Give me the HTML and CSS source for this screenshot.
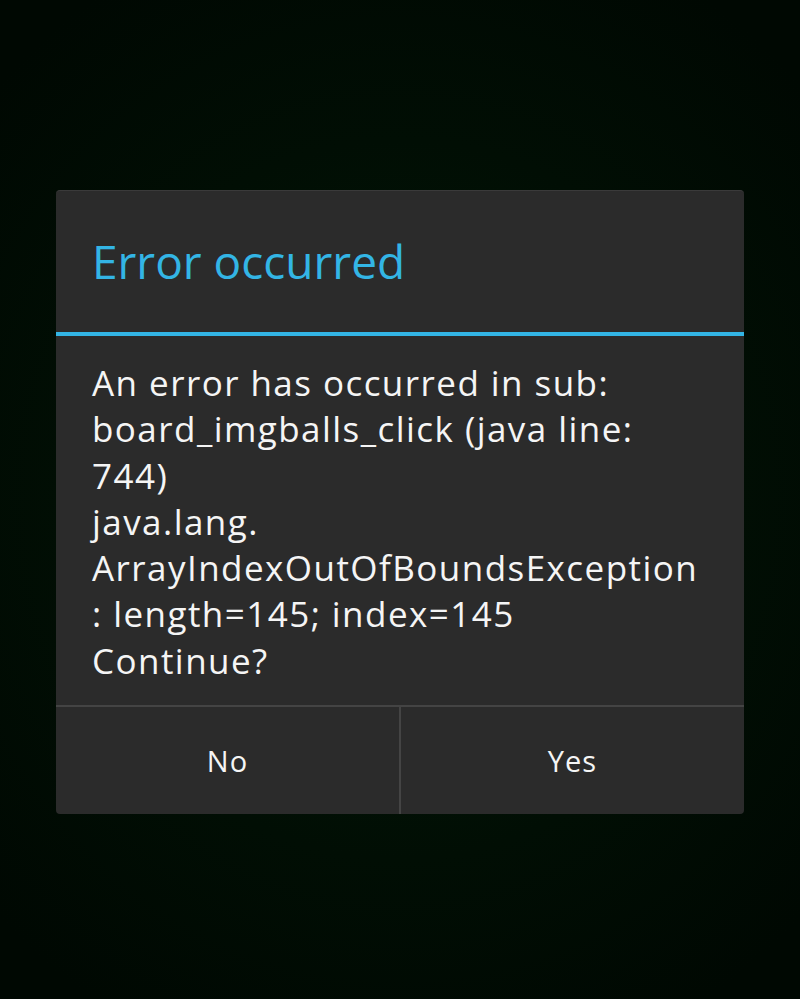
FILE: index.html
```html
<!DOCTYPE html>
<html>
<head>
<meta charset="utf-8">
<link rel="stylesheet" href="styles.css">
</head>
<body>
<div class="dialog">
  <div class="title">Error occurred</div>
  <div class="message">An error has occurred in sub:<br>board_imgballs_click (java line:<br>744)<br>java.lang.<br>ArrayIndexOutOfBoundsException<br>: length=145; index=145<br>Continue?</div>
  <div class="buttons">
    <div class="btn">No</div>
    <div class="btn">Yes</div>
  </div>
</div>
</body>
</html>
```
FILE: styles.css
```css
html, body {
  margin: 0;
  padding: 0;
  height: 100%;
}
body {
  background: radial-gradient(ellipse 70% 60% at 50% 50%, #031a08 0%, #010e04 60%, #000802 100%);
  font-family: "Open Sans", "DejaVu Sans", sans-serif;
  overflow: hidden;
}
.dialog {
  margin: 190px 56px 0;
  background: #2b2b2b;
  border-radius: 4px;
  border-top: 1px solid #3a3a3a;
  box-sizing: border-box;
  height: 624px;
  display: flex;
  flex-direction: column;
}
.title {
  height: 145px;
  flex-shrink: 0;
  box-sizing: border-box;
  padding: 0 36px 2px;
  display: flex;
  align-items: center;
  color: #33b5e5;
  font-size: 46px;
  border-bottom: 4px solid #33b5e5;
}
.message {
  padding: 24px 36px 21px;
  color: #f5f5f5;
  font-size: 35px;
  line-height: 46.3px;
  letter-spacing: 1.45px;
}
.buttons {
  flex: 1;
  display: flex;
  border-top: 2px solid #444;
}
.btn {
  flex: 1;
  display: flex;
  align-items: center;
  justify-content: center;
  color: #f5f5f5;
  font-size: 29px;
  letter-spacing: 1px;
}
.btn + .btn {
  border-left: 2px solid #444;
}
```
